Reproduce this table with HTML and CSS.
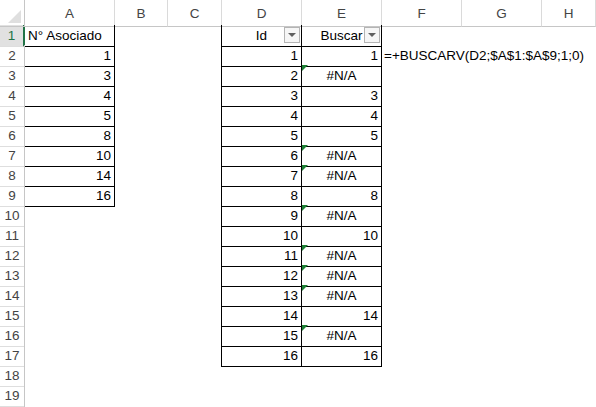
FILE: index.html
```html
<!DOCTYPE html>
<html lang="es">
<head>
<meta charset="utf-8">
<title>Hoja</title>
<link rel="stylesheet" href="styles.css">
</head>
<body>
<div class="sheet">
  <div class="row head">
    <div class="corner"><span class="tri"></span></div>
    <div class="ch">A</div><div class="ch">B</div><div class="ch">C</div><div class="ch">D</div><div class="ch">E</div><div class="ch">F</div><div class="ch">G</div><div class="ch">H</div>
  </div>
  <div class="row">
    <div class="rh sel">1</div>
    <div class="c bx">N° Asociado</div><div class="c"></div><div class="c bl"></div>
    <div class="c bx ctr">Id<span class="flt"></span></div>
    <div class="c bx ctr">Buscar<span class="flt"></span></div>
    <div class="c"></div><div class="c"></div><div class="c"></div>
  </div>
  <div class="row">
    <div class="rh">2</div>
    <div class="c bx n">1</div><div class="c"></div><div class="c bl"></div>
    <div class="c bx n">1</div><div class="c bx n">1</div>
    <div class="c fx">=+BUSCARV(D2;$A$1:$A$9;1;0)</div><div class="c"></div><div class="c"></div>
  </div>
  <div class="row">
    <div class="rh">3</div>
    <div class="c bx n">3</div><div class="c"></div><div class="c bl"></div>
    <div class="c bx n">2</div><div class="c bx ctr err">#N/A</div>
    <div class="c"></div><div class="c"></div><div class="c"></div>
  </div>
  <div class="row">
    <div class="rh">4</div>
    <div class="c bx n">4</div><div class="c"></div><div class="c bl"></div>
    <div class="c bx n">3</div><div class="c bx n">3</div>
    <div class="c"></div><div class="c"></div><div class="c"></div>
  </div>
  <div class="row">
    <div class="rh">5</div>
    <div class="c bx n">5</div><div class="c"></div><div class="c bl"></div>
    <div class="c bx n">4</div><div class="c bx n">4</div>
    <div class="c"></div><div class="c"></div><div class="c"></div>
  </div>
  <div class="row">
    <div class="rh">6</div>
    <div class="c bx n">8</div><div class="c"></div><div class="c bl"></div>
    <div class="c bx n">5</div><div class="c bx n">5</div>
    <div class="c"></div><div class="c"></div><div class="c"></div>
  </div>
  <div class="row">
    <div class="rh">7</div>
    <div class="c bx n">10</div><div class="c"></div><div class="c bl"></div>
    <div class="c bx n">6</div><div class="c bx ctr err">#N/A</div>
    <div class="c"></div><div class="c"></div><div class="c"></div>
  </div>
  <div class="row">
    <div class="rh">8</div>
    <div class="c bx n">14</div><div class="c"></div><div class="c bl"></div>
    <div class="c bx n">7</div><div class="c bx ctr err">#N/A</div>
    <div class="c"></div><div class="c"></div><div class="c"></div>
  </div>
  <div class="row">
    <div class="rh">9</div>
    <div class="c bx n">16</div><div class="c"></div><div class="c bl"></div>
    <div class="c bx n">8</div><div class="c bx n">8</div>
    <div class="c"></div><div class="c"></div><div class="c"></div>
  </div>
  <div class="row">
    <div class="rh">10</div>
    <div class="c"></div><div class="c"></div><div class="c bl"></div>
    <div class="c bx n">9</div><div class="c bx ctr err">#N/A</div>
    <div class="c"></div><div class="c"></div><div class="c"></div>
  </div>
  <div class="row">
    <div class="rh">11</div>
    <div class="c"></div><div class="c"></div><div class="c bl"></div>
    <div class="c bx n">10</div><div class="c bx n">10</div>
    <div class="c"></div><div class="c"></div><div class="c"></div>
  </div>
  <div class="row">
    <div class="rh">12</div>
    <div class="c"></div><div class="c"></div><div class="c bl"></div>
    <div class="c bx n">11</div><div class="c bx ctr err">#N/A</div>
    <div class="c"></div><div class="c"></div><div class="c"></div>
  </div>
  <div class="row">
    <div class="rh">13</div>
    <div class="c"></div><div class="c"></div><div class="c bl"></div>
    <div class="c bx n">12</div><div class="c bx ctr err">#N/A</div>
    <div class="c"></div><div class="c"></div><div class="c"></div>
  </div>
  <div class="row">
    <div class="rh">14</div>
    <div class="c"></div><div class="c"></div><div class="c bl"></div>
    <div class="c bx n">13</div><div class="c bx ctr err">#N/A</div>
    <div class="c"></div><div class="c"></div><div class="c"></div>
  </div>
  <div class="row">
    <div class="rh">15</div>
    <div class="c"></div><div class="c"></div><div class="c bl"></div>
    <div class="c bx n">14</div><div class="c bx n">14</div>
    <div class="c"></div><div class="c"></div><div class="c"></div>
  </div>
  <div class="row">
    <div class="rh">16</div>
    <div class="c"></div><div class="c"></div><div class="c bl"></div>
    <div class="c bx n">15</div><div class="c bx ctr err">#N/A</div>
    <div class="c"></div><div class="c"></div><div class="c"></div>
  </div>
  <div class="row">
    <div class="rh">17</div>
    <div class="c"></div><div class="c"></div><div class="c bl"></div>
    <div class="c bx n">16</div><div class="c bx n">16</div>
    <div class="c"></div><div class="c"></div><div class="c"></div>
  </div>
  <div class="row">
    <div class="rh">18</div>
    <div class="c"></div><div class="c"></div><div class="c"></div><div class="c"></div><div class="c"></div><div class="c"></div><div class="c"></div><div class="c"></div>
  </div>
  <div class="row">
    <div class="rh">19</div>
    <div class="c"></div><div class="c"></div><div class="c"></div><div class="c"></div><div class="c"></div><div class="c"></div><div class="c"></div><div class="c"></div>
  </div>
  <div class="row">
    <div class="rh"></div>
    <div class="c"></div><div class="c"></div><div class="c"></div><div class="c"></div><div class="c"></div><div class="c"></div><div class="c"></div><div class="c"></div>
  </div>
</div>
</body>
</html>
```
FILE: styles.css
```css
* { box-sizing: border-box; }
html, body { margin: 0; padding: 0; background: #fff; }
body {
  font-family: "Liberation Sans", Arial, sans-serif;
  font-size: 13.5px;
  color: #000;
  width: 596px;
  height: 407px;
  overflow: hidden;
}
.sheet { display: flex; flex-direction: column; }
.row {
  display: grid;
  grid-template-columns: 25px 90px 53px 54px 80px 80px 80px 80px 54px;
  height: 20px;
}
.row.head { height: 25px; }
.corner {
  position: relative;
  border-right: 1px solid #c6c6c6;
  border-bottom: 1px solid #c6c6c6;
}
.tri {
  position: absolute;
  right: 3px;
  bottom: 3px;
  width: 0; height: 0;
  border-left: 13px solid transparent;
  border-bottom: 13px solid #dfdfdf;
}
.ch {
  border-right: 1px solid #dadada;
  border-bottom: 1px solid #c6c6c6;
  color: #444;
  text-align: center;
  line-height: 24px;
  padding-top: 2px;
  font-size: 13.5px;
}
.rh {
  border-right: 1px solid #c6c6c6;
  border-bottom: 1px solid #dedede;
  color: #444;
  text-align: center;
  line-height: 20px;
  padding-top: 1px;
  font-size: 13.5px;
}
.rh.sel {
  background: #e1e1e1;
  color: #217346;
  border-right: 2px solid #217346;
}
.c {
  position: relative;
  line-height: 20px;
  padding: 1px 3px 0 3px;
  white-space: nowrap;
}
.bx { border-right: 1px solid #000; border-bottom: 1px solid #000; }
.bl { border-right: 1px solid #000; }
.n { text-align: right; }
.ctr { text-align: center; }
.fx { overflow: visible; padding-left: 2px; }
.err::before {
  content: "";
  position: absolute;
  left: 0; top: 0;
  width: 0; height: 0;
  border-top: 6px solid #1e8035;
  border-right: 6px solid transparent;
}
.flt {
  position: absolute;
  right: 1px;
  top: 2px;
  width: 16px;
  height: 16px;
  border: 1px solid #b4b4b4;
  background: #f6f6f6;
}
.flt::after {
  content: "";
  position: absolute;
  left: 3px;
  top: 5px;
  width: 0; height: 0;
  border-left: 4px solid transparent;
  border-right: 4px solid transparent;
  border-top: 4px solid #606060;
}
```
